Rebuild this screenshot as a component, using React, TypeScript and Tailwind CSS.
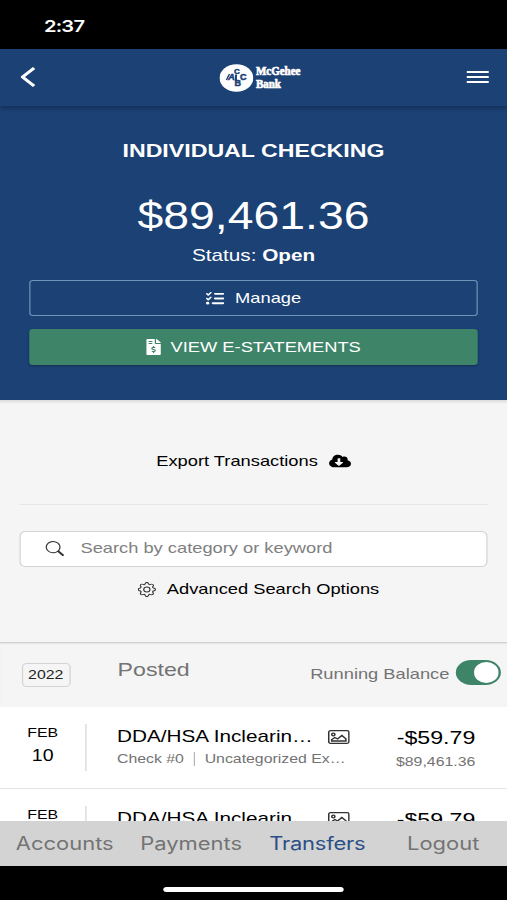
import { FaCloudDownloadAlt, FaFileInvoiceDollar } from 'react-icons/fa';
import { FaListCheck } from 'react-icons/fa6';
import { BsGear, BsSearch } from 'react-icons/bs';

interface Transaction {
  id: string;
  month: string;
  day: string;
  title: string;
  check: string;
  category: string;
  amount: string;
  balance: string;
}

const transactions: Transaction[] = [
  { id: '1', month: 'FEB', day: '10', title: 'DDA/HSA Inclearin…', check: 'Check #0', category: 'Uncategorized Ex…', amount: '-$59.79', balance: '$89,461.36' },
  { id: '2', month: 'FEB', day: '10', title: 'DDA/HSA Inclearin…', check: 'Check #0', category: 'Uncategorized Ex…', amount: '-$59.79', balance: '$89,521.15' },
];

function Logo() {
  return (
    <div className="ml-[7px] flex items-center gap-[2px]">
      <svg className="h-7 w-[28px]" viewBox="0 0 34 28" preserveAspectRatio="none">
        <ellipse cx="17" cy="14" rx="16.8" ry="13.8" fill="#fff" />
        <g fill="#1b4175" stroke="#1b4175" strokeWidth="0.5" fontFamily="Liberation Sans" fontWeight="bold">
          <path d="M7 16l3-6" fill="none" strokeWidth="1.400" />
          <text x="8.500" y="16.500" fontSize="9.500" fontStyle="italic">A</text>
          <text x="14.500" y="9.800" fontSize="8">C</text>
          <text x="20.500" y="16.500" fontSize="9">C</text>
          <text x="15" y="22.500" fontSize="9">B</text>
          <path d="M16.500 10.500v7" strokeWidth="2" />
        </g>
      </svg>
      <div className="w-9 font-['Liberation_Serif',serif] text-[12.500px] font-bold whitespace-nowrap text-white [-webkit-text-stroke:0.7px_white]">
        <div className="h-[12.500px] origin-left scale-x-[0.720] leading-[12.500px]">McGehee</div>
        <div className="h-[12.500px] origin-left scale-x-[0.720] leading-[12.500px]">Bank</div>
      </div>
    </div>
  );
}

function ImageIcon() {
  return (
    <svg className="h-[14px] w-[18px]" viewBox="0 0 18 14" preserveAspectRatio="none" fill="none" stroke="#333" strokeWidth="1.300">
      <rect x="0.700" y="0.700" width="16.600" height="12.600" rx="1.500" />
      <circle cx="4.500" cy="4.500" r="1.300" />
      <path d="M3.200 11V9.500l2.600-2 2.200 1.500 3.500-3.500 3.300 3.200V11z" />
    </svg>
  );
}

function TransactionRow({ item }: { item: Transaction }) {
  return (
    <div className="flex h-[82px] shrink-0 border-b border-[#e4e4e4] bg-white">
      <div className="w-[70px] pt-[18px] text-center text-black">
        <div className="text-[13px] leading-4">{item.month}</div>
        <div className="mt-[5px] text-[16px] leading-5">{item.day}</div>
      </div>
      <div className="mt-[17px] h-[47px] w-px bg-[#d4d4d4]" />
      <div className="ml-[25px] w-[194px] pt-[19px]">
        <div className="flex items-center">
          <div className="w-[161px] text-[17px] leading-[22px] whitespace-nowrap text-black">{item.title}</div>
          <div className="ml-[12px]">
            <ImageIcon />
          </div>
        </div>
        <div className="mt-[3px] flex items-center text-[13px] leading-4 whitespace-nowrap text-[#737373]">
          <span>{item.check}</span>
          <span className="mx-[8px] h-[14px] w-px bg-[#b5b5b5]" />
          <span>{item.category}</span>
        </div>
      </div>
      <div className="w-[100px] pt-[20px] text-right">
        <div className="text-[19px] leading-[22px] text-black">{item.amount}</div>
        <div className="mt-[5px] text-[13px] leading-4 text-[#737373]">{item.balance}</div>
      </div>
    </div>
  );
}

export default function App() {
  return (
    <div className="h-[900px] w-[507px] overflow-hidden">
      <div className="flex h-[900px] w-[416px] origin-left scale-x-[1.21875] flex-col bg-black font-['Liberation_Sans',Arial,sans-serif]">
        <div className="h-[49px] shrink-0 pt-[16px] pl-[36px] font-['Inter',sans-serif] text-[16.500px] leading-5 font-semibold tracking-[-0.600px] text-white">
          2:37
        </div>

        <header className="z-10 flex h-[57px] shrink-0 items-center justify-between bg-[#1b4175] pr-[15px] pl-[17px] shadow-[0_2px_4px_rgba(0,0,0,0.300)]">
          <svg className="-mt-px h-5 w-[50px]" viewBox="0 0 50 20" fill="none" stroke="#fff" strokeWidth="2.800">
            <path d="M11 1L1.500 10l9.500 9" />
          </svg>
          <Logo />
          <div className="-mt-px flex w-[50px] flex-col items-end gap-[3px]">
            <span className="h-[2px] w-[18px] bg-white" />
            <span className="h-[2px] w-[18px] bg-white" />
            <span className="h-[2px] w-[18px] bg-white" />
          </div>
        </header>

        <section className="flex h-[294px] shrink-0 flex-col items-center bg-[#1b4175] px-[24px] text-white">
          <h1 className="mt-[33px] text-[19px] leading-6 font-bold">INDIVIDUAL CHECKING</h1>
          <div className="mt-[31px] text-[38px] leading-[44px]">$89,461.36</div>
          <div className="mt-[8px] text-[17px] leading-5">
            Status: <b>Open</b>
          </div>
          <button className="mt-[14px] flex h-[36px] w-full shrink-0 items-center justify-center gap-[9px] rounded-[3px] border border-[#6f94b8] text-[15px]">
            <FaListCheck className="h-[15px] w-[15px]" />
            Manage
          </button>
          <button className="mt-[13px] flex h-[36px] w-full shrink-0 items-center justify-center gap-[8px] rounded-[3px] bg-[#3e8468] text-[15px] shadow-[0_1px_2px_rgba(0,0,0,0.300)]">
            <FaFileInvoiceDollar className="h-4 w-[12px]" />
            VIEW E-STATEMENTS
          </button>
        </section>

        <main className="flex min-h-0 flex-1 flex-col overflow-hidden bg-[#f5f5f5]">
          <div className="h-[4px] shrink-0 bg-linear-to-b from-[#dcdcdc] to-[#f5f5f5]" />
          <div className="mx-[16px] flex h-[101px] shrink-0 items-center justify-center gap-[9px] border-b border-[#e6e6e6] pt-[14px] text-[15px] text-black">
            Export Transactions
            <FaCloudDownloadAlt className="h-[18px] w-[18px]" />
          </div>
          <div className="mx-[16px] mt-[26px] flex h-[36px] shrink-0 items-center rounded-[5px] border border-[#d3d3d3] bg-white pb-px pl-[20px] text-[15px] text-[#808080]">
            <BsSearch className="mr-[13px] h-[15px] w-[16px] text-[#333]" />
            Search by category or keyword
          </div>
          <div className="mt-[12px] flex h-5 shrink-0 items-center justify-center gap-[9px] pl-[8px] text-[15px] text-black">
            <BsGear className="h-[15px] w-[15px] text-[#333]" />
            Advanced Search Options
          </div>
          <div className="mt-[43px] flex h-[65px] shrink-0 border-t border-[#d3d3d3] text-[#737373] shadow-[inset_0_1px_1px_rgba(0,0,0,0.080)]">
            <div className="mt-[20px] ml-[17.500px] flex h-[24px] w-[40px] items-center justify-center rounded-[4px] border border-[#d3d3d3] text-[13px] text-[#222]">
              2022
            </div>
            <div className="mt-[15px] ml-[39px] w-[158px] text-[19px] leading-[23px]">Posted</div>
            <div className="mt-[21px] text-[15px] leading-5">Running Balance</div>
            <div className="mt-[17px] ml-[5px] flex h-[25px] w-[37px] justify-end rounded-full bg-[#3e8468] p-[2px]">
              <span className="h-[21px] w-[20px] rounded-full bg-white" />
            </div>
          </div>
          {transactions.map((item) => (
            <TransactionRow key={item.id} item={item} />
          ))}
        </main>

        <nav className="z-10 flex h-[45px] shrink-0 items-center bg-[#d3d3d3] pl-[13px] font-['Inter',sans-serif] text-[18px] text-[#737373]">
          <span className="w-[102px]">Accounts</span>
          <span className="w-[106px]">Payments</span>
          <span className="w-[113px] tracking-[-0.200px] text-[#2a4f86]">Transfers</span>
          <span>Logout</span>
        </nav>
        <div className="flex h-[34px] shrink-0 justify-center bg-black pt-[21px]">
          <div className="h-[5px] w-[148px] rounded-full bg-white" />
        </div>
      </div>
    </div>
  );
}
